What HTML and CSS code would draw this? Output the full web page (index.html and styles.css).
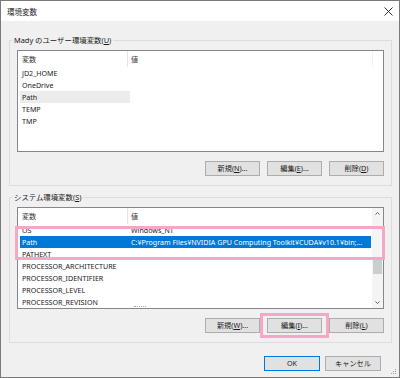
FILE: index.html
```html
<!DOCTYPE html>
<html>

<head>
  <meta charset="UTF-8">
  <title>環境変数</title>
  <link rel="stylesheet" href="styles.css">
</head>

<body>
  <div class="window">
    <div class="titlebar">
      <span class="title">環境変数</span>
      <svg class="close" width="9" height="9" viewBox="0 0 9 9">
        <path d="M0.5 0.5 L8.5 8.5 M8.5 0.5 L0.5 8.5" stroke="#1a1a1a" stroke-width="0.9" fill="none" />
      </svg>
    </div>

    <div class="dialog-body">
      <!-- user variables -->
      <fieldset class="group">
        <legend>Mady のユーザー環境変数(<u>U</u>)</legend>
        <div class="listbox">
          <div class="lv-main">
            <div class="lv-header">
              <div class="hcol name">変数</div>
              <div class="hcol value faint-end">値</div>
            </div>
            <div class="lv-row"><div class="name">JD2_HOME</div><div class="value"></div></div>
            <div class="lv-row"><div class="name">OneDrive</div><div class="value"></div></div>
            <div class="lv-row inactive-sel"><div class="name">Path</div><div class="value"></div></div>
            <div class="lv-row"><div class="name">TEMP</div><div class="value"></div></div>
            <div class="lv-row"><div class="name">TMP</div><div class="value"></div></div>
          </div>
        </div>
        <div class="btn-row">
          <button class="btn">新規(<u>N</u>)...</button>
          <button class="btn">編集(<u>E</u>)...</button>
          <button class="btn">削除(<u>D</u>)</button>
        </div>
      </fieldset>

      <!-- system variables -->
      <fieldset class="group system">
        <legend>システム環境変数(<u>S</u>)</legend>
        <div class="listbox">
          <div class="lv-main">
            <div class="lv-header">
              <div class="hcol name">変数</div>
              <div class="hcol value">値</div>
            </div>
            <div class="lv-row"><div class="name">OS</div><div class="value">Windows_NT</div></div>
            <div class="lv-row selected"><div class="name">Path</div><div class="value">C:¥Program Files¥NVIDIA GPU Computing Toolkit¥CUDA¥v10.1¥bin;...</div></div>
            <div class="lv-row"><div class="name">PATHEXT</div><div class="value"></div></div>
            <div class="lv-row"><div class="name">PROCESSOR_ARCHITECTURE</div><div class="value"></div></div>
            <div class="lv-row"><div class="name">PROCESSOR_IDENTIFIER</div><div class="value"></div></div>
            <div class="lv-row"><div class="name">PROCESSOR_LEVEL</div><div class="value"></div></div>
            <div class="lv-row"><div class="name">PROCESSOR_REVISION</div><div class="value"><div class="dots"></div></div></div>
          </div>
          <div class="vscroll">
            <div class="arrow">
              <svg width="5" height="3" viewBox="0 0 5 3"><path d="M0.5 2.5 L2.5 0.5 L4.5 2.5" stroke="#606060" fill="none" /></svg>
            </div>
            <div class="track"><div class="thumb"></div></div>
            <div class="arrow">
              <svg width="5" height="3" viewBox="0 0 5 3"><path d="M0.5 0.5 L2.5 2.5 L4.5 0.5" stroke="#606060" fill="none" /></svg>
            </div>
          </div>
        </div>
        <div class="btn-row">
          <button class="btn">新規(<u>W</u>)...</button>
          <button class="btn marked">編集(<u>I</u>)...</button>
          <button class="btn">削除(<u>L</u>)</button>
        </div>
      </fieldset>

      <div class="dialog-buttons">
        <button class="btn default">OK</button>
        <button class="btn">キャンセル</button>
      </div>
    </div>

    <!-- annotation around the Path rows -->
    <div class="callout-rows"></div>

    <svg class="grip" width="6" height="6" viewBox="0 0 6 6">
      <rect x="4" y="0" width="1" height="1" fill="#a0a0a0" />
      <rect x="2" y="2" width="1" height="1" fill="#a0a0a0" />
      <rect x="4" y="2" width="1" height="1" fill="#a0a0a0" />
      <rect x="0" y="4" width="1" height="1" fill="#a0a0a0" />
      <rect x="2" y="4" width="1" height="1" fill="#a0a0a0" />
      <rect x="4" y="4" width="1" height="1" fill="#a0a0a0" />
    </svg>
  </div>
</body>

</html>
```

FILE: styles.css
```css
* {
  box-sizing: border-box;
}

html,
body {
  margin: 0;
  padding: 0;
}

body {
  font-family: "Noto Sans", "Noto Sans CJK JP", sans-serif;
  font-size: 7.1px;
  color: #1a1a1a;
}

.window {
  position: relative;
  width: 400px;
  height: 378px;
  border: 1px solid #7a7a7a;
  background: #f0f0f0;
  display: flex;
  flex-direction: column;
}

.titlebar {
  height: 20px;
  background: #fff;
  display: flex;
  align-items: center;
  justify-content: space-between;
  padding: 0 6px 0 6px;
}

.title {
  font-family: "Noto Sans CJK JP", sans-serif;
  font-size: 7.5px;
}

.dialog-body {
  flex: 1;
  display: flex;
  flex-direction: column;
  padding: 13px 7px 0 8px;
}

.group {
  margin: 0;
  padding: 4px 7px 9px;
  border: 1px solid #dcdcdc;
  min-width: 0;
}

.group.system {
  margin-top: 5px;
}

.group legend {
  margin-left: -5px;
  padding: 0 2px;
  line-height: 12px;
  height: 12px;
  font-size: 7.4px;
}

u {
  text-underline-offset: 1px;
}

.listbox {
  display: flex;
  height: 102px;
  border: 1px solid #828790;
  background: #fff;
  overflow: hidden;
}

.lv-main {
  flex: 1;
  min-width: 0;
}

.lv-header {
  display: flex;
  height: 16px;
  line-height: 16px;
  color: #333;
}

.hcol.name {
  width: 110px;
  padding-left: 4px;
  border-right: 1px solid #e5e5e5;
}

.hcol.value {
  flex: 1;
  padding-left: 3px;
}

.hcol.faint-end {
  flex: none;
  width: 245px;
  border-right: 1px solid #f0f0f0;
}

.lv-row {
  display: flex;
  height: 12px;
  line-height: 12px;
  margin: 0 1px 0 2px;
  white-space: nowrap;
}

.lv-row .name {
  width: 110px;
  padding-left: 2px;
}

.lv-row .value {
  flex: 1;
  padding-left: 1px;
  overflow: hidden;
}

.dots {
  width: 12px;
  margin: 10px 0 0 3px;
  border-top: 1px dotted #a8a8a8;
}

.lv-row.inactive-sel .name {
  background: #ececec;
}

.lv-row.selected {
  background: #0078d7;
  color: #fff;
}

.vscroll {
  width: 11px;
  background: #f4f4f4;
  display: flex;
  flex-direction: column;
}

.arrow {
  height: 11px;
  display: flex;
  align-items: center;
  justify-content: center;
}

.track {
  flex: 1;
}

.thumb {
  margin: 39px 1px 0;
  height: 16px;
  background: #cdcdcd;
}

.btn-row {
  display: flex;
  justify-content: flex-end;
  gap: 7px;
  margin-top: 9px;
}

.btn {
  position: relative;
  width: 55px;
  height: 15px;
  padding: 0;
  border: 1px solid #adadad;
  background: #e1e1e1;
  font-family: "Noto Sans", "Noto Sans CJK JP", sans-serif;
  font-size: 7.2px;
  line-height: 13px;
  color: #1a1a1a;
}

.btn.marked::after {
  content: "";
  position: absolute;
  inset: -6px -8px;
  border: 3px solid #f4a7c6;
}

.dialog-buttons {
  display: flex;
  justify-content: flex-end;
  gap: 5px;
  margin-top: 13px;
  padding-right: 11px;
}

.dialog-buttons .btn {
  width: 56px;
}

.btn.default {
  border-color: #0078d7;
}

.callout-rows {
  position: absolute;
  left: 14px;
  top: 225px;
  width: 370px;
  height: 34px;
  border: 3px solid #f4a7c6;
}

.grip {
  position: absolute;
  right: 2px;
  bottom: 2px;
}
```
